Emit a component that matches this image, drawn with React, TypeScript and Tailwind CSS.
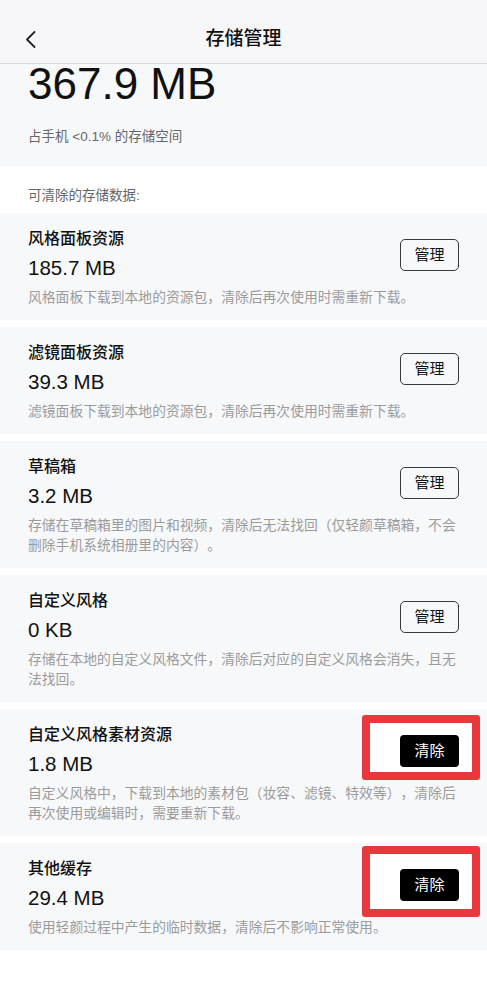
import React from "react";

type Item = {
  title: string;
  value: string;
  desc: string;
  action: "manage" | "clear";
  mark?: string;
};

const items: Item[] = [
  { title: "风格面板资源", value: "185.7 MB", desc: "风格面板下载到本地的资源包，清除后再次使用时需重新下载。", action: "manage" },
  { title: "滤镜面板资源", value: "39.3 MB", desc: "滤镜面板下载到本地的资源包，清除后再次使用时需重新下载。", action: "manage" },
  { title: "草稿箱", value: "3.2 MB", desc: "存储在草稿箱里的图片和视频，清除后无法找回（仅轻颜草稿箱，不会删除手机系统相册里的内容）。", action: "manage" },
  { title: "自定义风格", value: "0 KB", desc: "存储在本地的自定义风格文件，清除后对应的自定义风格会消失，且无法找回。", action: "manage" },
  { title: "自定义风格素材资源", value: "1.8 MB", desc: "自定义风格中，下载到本地的素材包（妆容、滤镜、特效等），清除后再次使用或编辑时，需要重新下载。", action: "clear", mark: "a" },
  { title: "其他缓存", value: "29.4 MB", desc: "使用轻颜过程中产生的临时数据，清除后不影响正常使用。", action: "clear", mark: "b" },
];

const font = { fontFamily: '"Liberation Sans", "Noto Sans CJK SC", sans-serif' };

function Card({ item }: { item: Item }) {
  return (
    <div className="relative bg-[#f7f8fa] px-7 pt-[15px] pb-3">
      {item.mark === "a" && (
        <div className="absolute right-[7px] top-[6px] h-[65px] w-[118px] rounded-[3px] border-[8px] border-[#e8383b] bg-white" />
      )}
      {item.mark === "b" && (
        <div className="absolute right-[7px] top-[3px] h-[71px] w-[118px] rounded-[3px] border-[8px] border-[#e8383b] bg-white" />
      )}
      <div className="flex items-center justify-between">
        <div>
          <div className="text-[16px] leading-[22px] font-medium text-[#111]">{item.title}</div>
          <div className="mt-1 text-[20.5px] leading-[28px] text-[#111]">{item.value}</div>
        </div>
        {item.action === "manage" ? (
          <button className="relative z-10 flex h-8 w-[59px] items-center justify-center rounded-[5px] border border-[#3a3a3a] text-[15px] text-[#111]">
            管理
          </button>
        ) : (
          <button className="relative z-10 flex h-8 w-[59px] items-center justify-center rounded-[4px] bg-black text-[15px] text-white">
            清除
          </button>
        )}
      </div>
      <div className="relative mt-[6px] text-[13.8px] leading-5 text-[#9b9b9b] [text-spacing-trim:space-all]">{item.desc}</div>
    </div>
  );
}

export default function App() {
  return (
    <div className="min-h-[1000px] w-[487px] bg-white [text-spacing-trim:space-all]" style={font}>
      <div className="grid h-16 grid-cols-[1fr_auto_1fr] items-center border-b border-[#dadada] bg-[#f7f7f9] pt-4">
        <div className="pl-[25px]">
          <svg width="11" height="17" viewBox="0 0 11 17" fill="none">
            <polyline points="9.5,1 2,8.5 9.5,16" stroke="#222" strokeWidth="1.8" strokeLinecap="round" strokeLinejoin="round" />
          </svg>
        </div>
        <div className="text-[19px] font-medium text-[#111]">存储管理</div>
        <div />
      </div>
      <div className="bg-[#f7f8fa] px-7 pb-[19px]">
        <div className="text-[44px] leading-[40px] text-[#111]">367.9 MB</div>
        <div className="mt-[23px] text-[13.5px] leading-5 text-[#666]">占手机 &lt;0.1% 的存储空间</div>
      </div>
      <div className="px-7 pt-5 pb-[7px] text-[13.5px] leading-5 text-[#666]">可清除的存储数据:</div>
      <div className="flex flex-col gap-[7px]">
        {items.map((it) => (
          <Card key={it.title} item={it} />
        ))}
      </div>
    </div>
  );
}
